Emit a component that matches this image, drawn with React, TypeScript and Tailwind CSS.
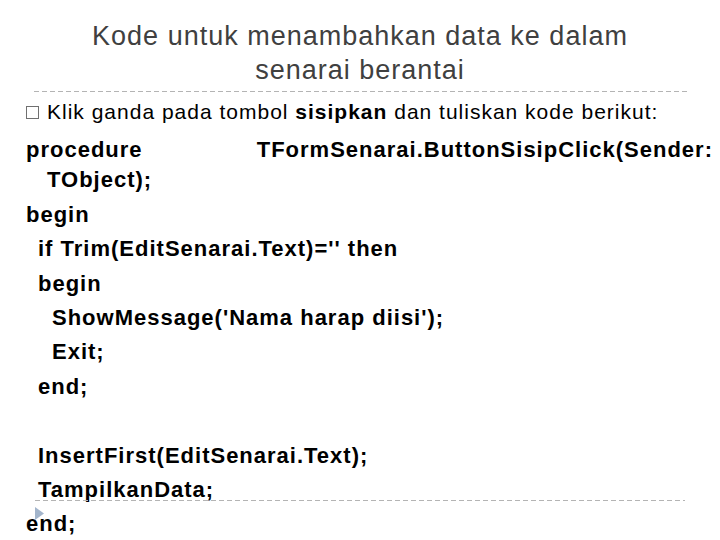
import React from "react";

const dash = "h-px bg-[repeating-linear-gradient(to_right,#b4b4b4_0_5px,transparent_5px_8px)]";

export default function App() {
  return (
    <div className="relative w-[720px] h-[540px] bg-white overflow-hidden font-['Liberation_Sans',Arial,sans-serif]">
      <div className="pt-[19px] text-center text-[27px] tracking-[1px] leading-[34px] text-[#404040]">
        <div>Kode untuk menambahkan data ke dalam</div>
        <div>senarai berantai</div>
      </div>
      <div className={`ml-[34px] mr-[33px] mt-[4px] ${dash}`} />
      <div className="flex items-center mt-[8px] ml-[26px] text-[21px] tracking-[1px] leading-[24px] text-black">
        <span className="w-[13px] h-[13px] border border-[#707070] mr-[8px] shrink-0" />
        <span>
          Klik ganda pada tombol <b>sisipkan</b> dan tuliskan kode berikut:
        </span>
      </div>
      <div className="mt-[9px] font-bold text-[22px] tracking-[1px] leading-[34.4px] text-black">
        <div className="flex justify-between pl-[26px] pr-[7px]">
          <span>procedure</span>
          <span>TFormSenarai.ButtonSisipClick(Sender:</span>
        </div>
        <div className="pl-[47px] -mt-[4px]">TObject);</div>
        <div className="pl-[26px]">begin</div>
        <div className="pl-[38px]">if Trim(EditSenarai.Text)='' then</div>
        <div className="pl-[38px]">begin</div>
        <div className="pl-[52px]">ShowMessage('Nama harap diisi');</div>
        <div className="pl-[52px]">Exit;</div>
        <div className="pl-[38px]">end;</div>
        <div className="h-[34.4px]" />
        <div className="pl-[38px]">InsertFirst(EditSenarai.Text);</div>
        <div className="pl-[38px]">TampilkanData;</div>
        <div className="pl-[26px]">end;</div>
      </div>
      <div className={`absolute left-[35px] right-[35px] top-[500px] ${dash}`} />
      <svg className="absolute left-[35px] top-[507px]" width="9" height="13" viewBox="0 0 9 13">
        <polygon points="0,0 9,6.5 0,13" fill="#a3b5cc" />
      </svg>
    </div>
  );
}
